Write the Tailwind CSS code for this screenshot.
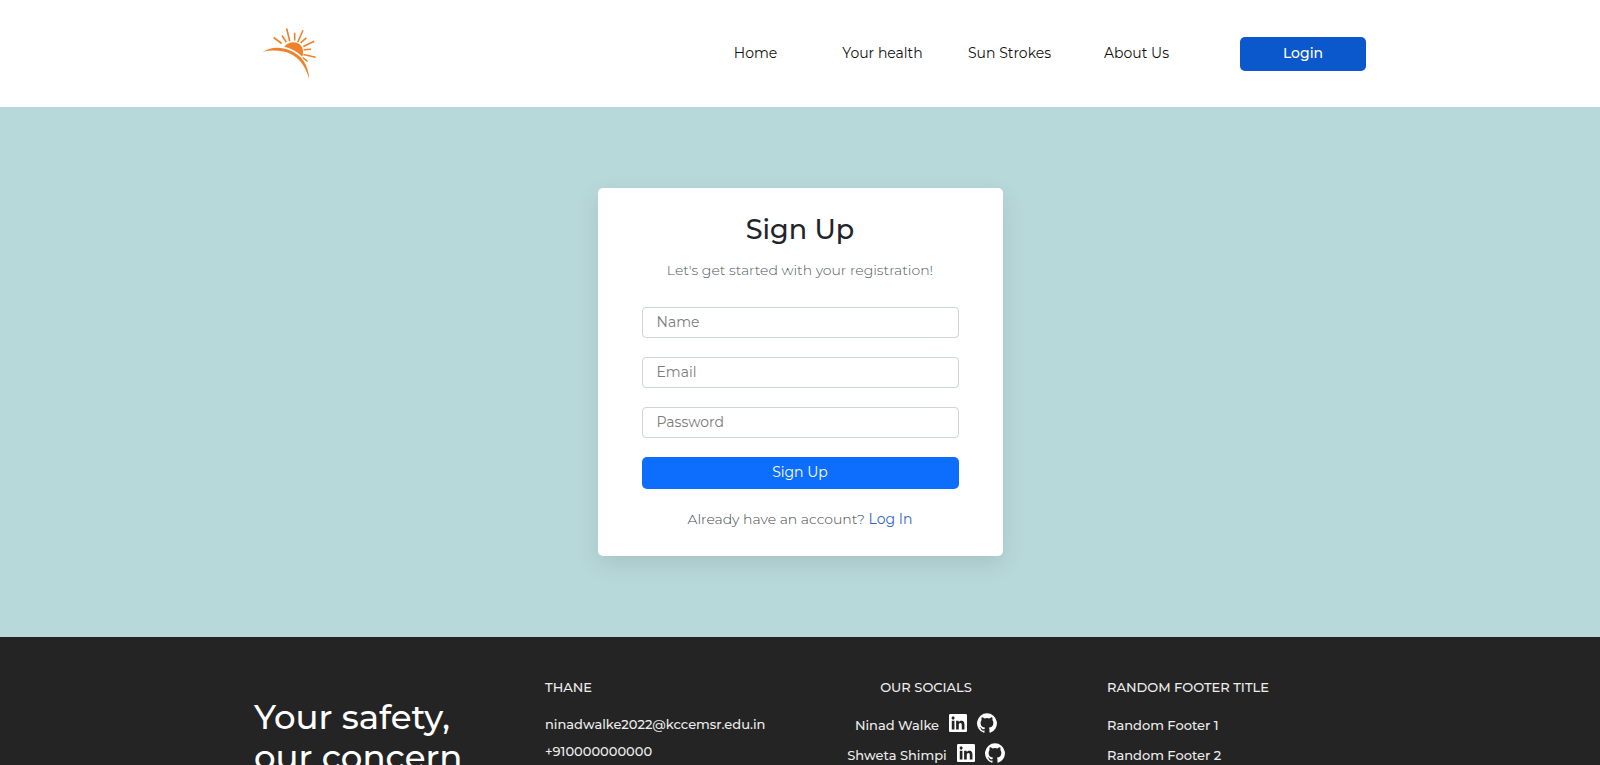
<!DOCTYPE html>
<html lang="en">
<head>
<meta charset="utf-8">
<meta name="viewport" content="width=device-width, initial-scale=1">
<title>Sign Up</title>
<script src="https://cdn.jsdelivr.net/npm/@tailwindcss/browser@4"></script>
</head>
<body class="overflow-x-hidden bg-[#242424] font-[Montserrat,Inter,sans-serif] text-sm text-[#212529]">
<svg class="hidden" aria-hidden="true">
  <symbol id="linkedin" viewBox="0 0 448 448"><path d="M416 0H31.900C14.300 0 0 14.500 0 32.300v383.400C0 433.500 14.300 448 31.900 448H416c17.600 0 32-14.500 32-32.300V32.300C448 14.500 433.600 0 416 0zM135.400 384H69V170.200h66.500V384zM102.200 141c-21.300 0-38.500-17.300-38.500-38.500S80.900 64 102.200 64c21.200 0 38.500 17.300 38.500 38.500 0 21.300-17.200 38.500-38.500 38.500zm282.100 243h-66.400V280c0-24.800-.5-56.700-34.500-56.700-34.600 0-39.900 27-39.900 54.900V384h-66.400V170.200h63.700v29.200h.9c8.900-16.800 30.600-34.500 62.900-34.500 67.200 0 79.700 44.300 79.700 101.900V384z"/></symbol>
  <symbol id="github" viewBox="0 0 24 24"><path d="M12 .3a12 12 0 0 0-3.800 23.380c.6.120.830-.260.830-.570L9 21.070c-3.340.720-4.040-1.610-4.040-1.610-.550-1.390-1.340-1.760-1.340-1.760-1.080-.740.090-.730.090-.730 1.200.090 1.840 1.240 1.840 1.240 1.070 1.830 2.810 1.300 3.500 1 .100-.780.420-1.310.760-1.610-2.670-.300-5.470-1.330-5.470-5.930 0-1.310.470-2.380 1.240-3.220-.140-.300-.540-1.520.100-3.180 0 0 1-.320 3.300 1.230a11.500 11.500 0 0 1 6 0c2.280-1.550 3.290-1.230 3.290-1.230.640 1.660.240 2.880.120 3.180a4.650 4.650 0 0 1 1.230 3.220c0 4.610-2.810 5.630-5.480 5.920.420.360.810 1.100.810 2.220l-.010 3.290c0 .310.200.690.820.570A12 12 0 0 0 12 .3"/></symbol>
</svg>

<header class="bg-white">
  <div class="mx-auto flex h-[107px] max-w-[1132px] items-center justify-between pl-7">
    <a href="#" aria-label="Home page">
      <svg class="h-[52px] w-14" viewBox="0 0 56 52" fill="#f0812b">
        <path d="M.7 23.800C6 21 10 19.800 14.700 19.800C19.500 19.800 24 20.600 28 22.500C34 25 38.500 28.500 41.300 32.500C45 38 47 44.500 47.300 51C44.500 42 40.500 34.500 34.700 29.700C30.500 26.200 26 24.200 21.300 23.400C14 22.200 7 22.300 .7 23.800Z"/>
        <path d="M22.300 18.800C24.500 15.700 27.500 14.200 31.300 14.200C36.500 14.200 40 17.300 40.800 21.500C41.200 24 41.100 26.300 40.300 28.700C35.500 23.700 29.500 20.300 22.300 18.800Z"/>
        <path fill="none" stroke="#f0812b" stroke-width="1.600" d="M11.700 9.500L19.700 15.500M20 7.500L24.300 14.200M24.700 .5L27.700 13.200M32.700 4.800V12.500M41 2.200L35.700 14.200M44.300 9.800L38.700 14.800M52.300 13.200L41.300 18.500M49 21.200L41.700 21.800M53.700 29.200L41.300 26.500M45.700 33.500L40.700 29.500"/>
      </svg>
    </a>
    <div class="flex items-center gap-10">
      <nav class="flex pb-0.5 text-center text-[#111]">
        <a href="#" class="w-[127px]">Home</a>
        <a href="#" class="w-[127px]">Your health</a>
        <a href="#" class="w-[127px]">Sun Strokes</a>
        <a href="#" class="w-[127px]">About Us</a>
      </nav>
      <button type="button" class="h-[34px] w-[126px] rounded-[5px] bg-[#0b57cc] pb-0.5 font-medium text-white">Login</button>
    </div>
  </div>
</header>

<main class="flex justify-center bg-[#b8d9da] px-4 py-[81px]">
  <form class="flex w-full max-w-[405px] flex-col rounded-[5px] bg-white px-11 pt-6 pb-[27px] text-center shadow-[0_8px_24px_rgba(0,0,0,0.1)]">
    <h1 class="text-[27px] leading-9 font-medium">Sign Up</h1>
    <p class="mt-3 leading-5 font-light text-[#50575d]">Let's get started with your registration!</p>
    <div class="mt-[27px] flex flex-col gap-[19px]">
      <input type="text" aria-label="Name" placeholder="Name" class="h-[31px] rounded-[4px] border border-[#ced4da] px-3.5 pb-0.5 placeholder:text-[#7b7b7b]">
      <input type="email" aria-label="Email" placeholder="Email" class="h-[31px] rounded-[4px] border border-[#ced4da] px-3.5 pb-0.5 placeholder:text-[#7b7b7b]">
      <input type="password" aria-label="Password" placeholder="Password" class="h-[31px] rounded-[4px] border border-[#ced4da] px-3.5 pb-0.5 placeholder:text-[#7b7b7b]">
      <button type="submit" class="h-8 rounded-[5px] bg-[#0d6efd] pb-0.5 text-white">Sign Up</button>
    </div>
    <p class="mt-5 leading-5 font-light text-[#41474c]">Already have an account? <a href="#" class="font-normal text-[#2f67c4]">Log In</a></p>
  </form>
</main>

<footer class="text-[13px] font-medium text-[#ececec]">
  <div class="mx-auto grid max-w-[1132px] grid-cols-[291px_291px_180px_1fr] pt-10 pb-10 pl-5">
    <h2 class="pt-5 text-[34px] leading-10 text-white">Your safety,<br>our concern</h2>
    <section>
      <h3 class="leading-5">THANE</h3>
      <a href="#" class="mt-[17px] block leading-5">ninadwalke2022@kccemsr.edu.in</a>
      <p class="mt-[7px] leading-5">+910000000000</p>
    </section>
    <section class="flex flex-col items-center">
      <h3 class="leading-5">OUR SOCIALS</h3>
      <div class="mt-[11px] flex h-[30px] items-center whitespace-nowrap">
        <span class="pt-1">Ninad Walke</span>
        <a href="#" aria-label="Ninad Walke on LinkedIn" class="ml-2.5"><svg class="size-[18px] fill-white"><use href="#linkedin"/></svg></a>
        <a href="#" aria-label="Ninad Walke on GitHub" class="ml-2.5"><svg class="size-5 fill-white"><use href="#github"/></svg></a>
      </div>
      <div class="flex h-[30px] items-center whitespace-nowrap">
        <span class="pt-1">Shweta Shimpi</span>
        <a href="#" aria-label="Shweta Shimpi on LinkedIn" class="ml-2.5"><svg class="size-[18px] fill-white"><use href="#linkedin"/></svg></a>
        <a href="#" aria-label="Shweta Shimpi on GitHub" class="ml-2.5"><svg class="size-5 fill-white"><use href="#github"/></svg></a>
      </div>
    </section>
    <section class="pl-[91px]">
      <h3 class="leading-5 whitespace-nowrap">RANDOM FOOTER TITLE</h3>
      <a href="#" class="mt-[18px] block leading-5">Random Footer 1</a>
      <a href="#" class="mt-2.5 block leading-5">Random Footer 2</a>
    </section>
  </div>
</footer>
</body>
</html>
